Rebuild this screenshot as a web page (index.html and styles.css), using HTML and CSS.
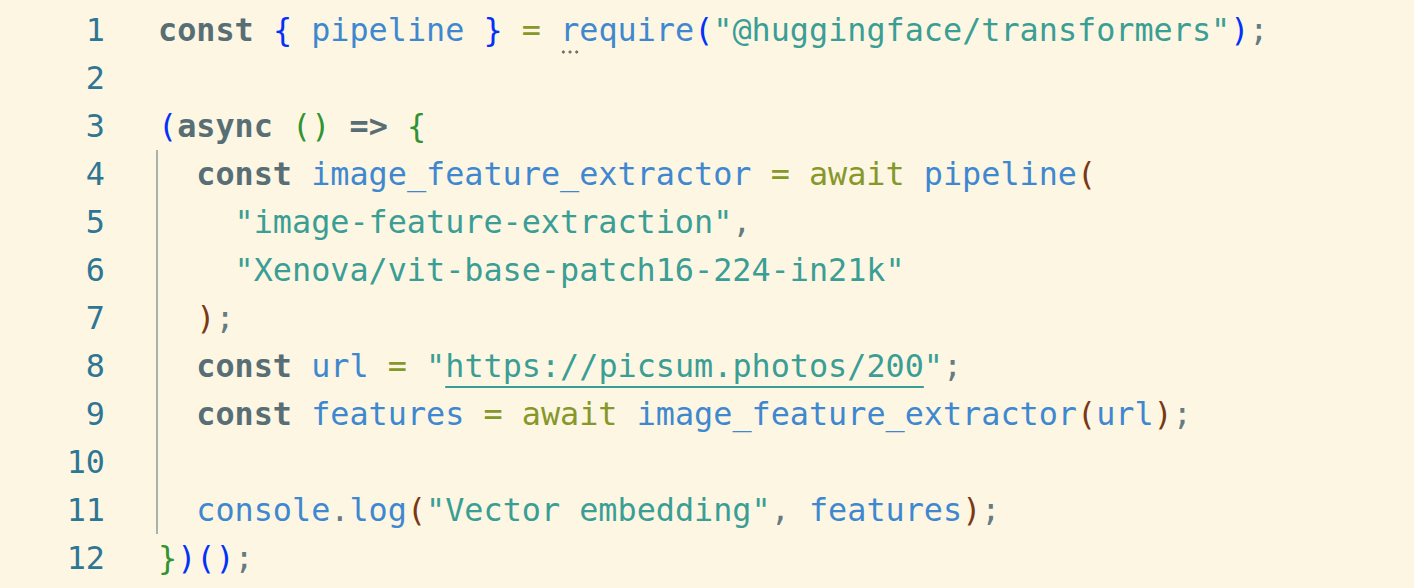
FILE: index.html
```html
<!DOCTYPE html>
<html>
<head>
<meta charset="utf-8">
<link rel="stylesheet" href="styles.css">
</head>
<body>
<div class="editor">
  <div class="gutter">
    <div class="ln">1</div>
    <div class="ln">2</div>
    <div class="ln">3</div>
    <div class="ln">4</div>
    <div class="ln">5</div>
    <div class="ln">6</div>
    <div class="ln">7</div>
    <div class="ln">8</div>
    <div class="ln">9</div>
    <div class="ln">10</div>
    <div class="ln">11</div>
    <div class="ln">12</div>
  </div>
  <div class="code">
    <div class="line"><span class="kw">const</span> <span class="b1">{</span> <span class="id">pipeline</span> <span class="b1">}</span> <span class="op">=</span> <span class="fn hint">require<span class="dots"></span></span><span class="b1">(</span><span class="str">"@huggingface/transformers"</span><span class="b1">)</span><span class="pn">;</span></div>
    <div class="line"> </div>
    <div class="line"><span class="b1">(</span><span class="kw">async</span> <span class="b2">()</span> <span class="kw">=&gt;</span> <span class="b2">{</span></div>
    <div class="block">
      <div class="line">  <span class="kw">const</span> <span class="id">image_feature_extractor</span> <span class="op">=</span> <span class="aw">await</span> <span class="fn">pipeline</span><span class="b3">(</span></div>
      <div class="line">    <span class="str">"image-feature-extraction"</span><span class="pn">,</span></div>
      <div class="line">    <span class="str">"Xenova/vit-base-patch16-224-in21k"</span></div>
      <div class="line">  <span class="b3">)</span><span class="pn">;</span></div>
      <div class="line">  <span class="kw">const</span> <span class="id">url</span> <span class="op">=</span> <span class="str">"<span class="link">https://picsum.photos/200</span>"</span><span class="pn">;</span></div>
      <div class="line">  <span class="kw">const</span> <span class="id">features</span> <span class="op">=</span> <span class="aw">await</span> <span class="fn">image_feature_extractor</span><span class="b3">(</span><span class="id">url</span><span class="b3">)</span><span class="pn">;</span></div>
      <div class="line"> </div>
      <div class="line">  <span class="id">console</span><span class="pn">.</span><span class="fn">log</span><span class="b3">(</span><span class="str">"Vector embedding"</span><span class="pn">,</span> <span class="id">features</span><span class="b3">)</span><span class="pn">;</span></div>
    </div>
    <div class="line"><span class="b2">}</span><span class="b1">)()</span><span class="pn">;</span></div>
  </div>
</div>
</body>
</html>
```

FILE: styles.css
```css
html, body {
  margin: 0;
  padding: 0;
  background: #fdf6e3;
}

.editor {
  display: flex;
  padding-top: 6px;
  font-family: "DejaVu Sans Mono", "Liberation Mono", monospace;
  font-size: 31.8px;
  line-height: 48px;
  background: #fdf6e3;
  color: #657b83;
  height: 582px;
}

.gutter {
  width: 105px;
  text-align: right;
  color: #2f7694;
}

.ln {
  height: 48px;
}

.code {
  padding-left: 53px;
}

.line {
  height: 48px;
  white-space: pre;
}

.block {
  border-left: 2px solid #aab3ab;
  margin-left: -2px;
}

.kw {
  color: #586e75;
  font-weight: bold;
}

.id, .fn {
  color: #3f88d0;
}

.op, .aw {
  color: #87982a;
}

.str {
  color: #3a9e95;
}

.pn {
  color: #657b83;
}

.b1 {
  color: #0431fa;
}

.b2 {
  color: #319331;
}

.b3 {
  color: #7b3814;
}

.link {
  text-decoration: underline;
  text-decoration-thickness: 2px;
  text-underline-offset: 9px;
}

.hint {
  position: relative;
}

.dots {
  position: absolute;
  left: 0;
  top: 39px;
  width: 20px;
  height: 4px;
  background-image: radial-gradient(circle, #6f6f6f 1.4px, transparent 1.8px);
  background-size: 6.7px 4px;
}
```
